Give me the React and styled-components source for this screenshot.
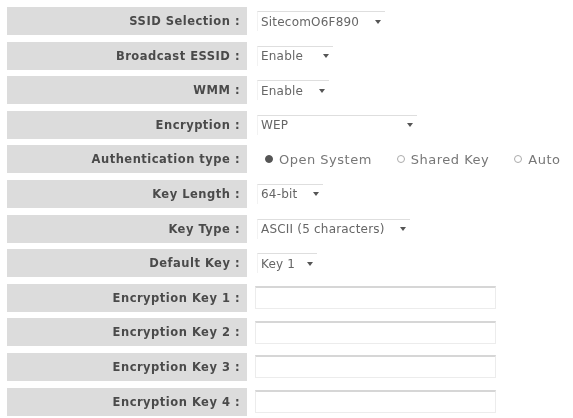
import React from "react";
import styled, { createGlobalStyle } from "styled-components";

const Global = createGlobalStyle`
  html, body { margin: 0; padding: 0; background: #fff; }
  body { font-family: "DejaVu Sans", Verdana, sans-serif; }
`;

const Form = styled.div`
  display: flex;
  flex-direction: column;
  gap: 6.6px;
  padding: 7px 0 0 7px;
  width: 566px;
`;

const Row = styled.div`
  display: grid;
  grid-template-columns: 240px 1fr;
  column-gap: 4px;
  height: 28px;
`;

const Label = styled.div`
  background: #dcdcdc;
  color: #4a4a4a;
  font-weight: bold;
  font-size: 11.5px;
  letter-spacing: 0.5px;
  text-align: right;
  line-height: 28px;
  padding-right: 7px;
  white-space: nowrap;
  filter: blur(0.5px);
`;

const Value = styled.div`
  display: flex;
  align-items: center;
  padding-left: ${(p) => p.$pad ?? 7}px;
  color: #666;
  font-size: 12px;
  letter-spacing: 0.2px;
  white-space: nowrap;
  filter: blur(0.4px);
`;

const FakeSelect = styled.div`
  display: flex;
  align-items: center;
  justify-content: space-between;
  width: ${(p) => p.$w}px;
  height: 20px;
  box-sizing: border-box;
  padding: 0 4px 0 3px;
  border-top: 1px solid #dedede;
  border-left: 1px solid #f2f2f2;
  color: #666;
`;

const Caret = styled.span`
  width: 0;
  height: 0;
  border-left: 3px solid transparent;
  border-right: 3px solid transparent;
  border-top: 4px solid #555;
  margin-left: 6px;
`;

const Radios = styled.div`
  display: flex;
  align-items: center;
  gap: 25px;
`;

const RadioItem = styled.label`
  display: flex;
  align-items: center;
  gap: 6px;
  color: #777;
  font-size: 13px;
  letter-spacing: 0.5px;
`;

const Dot = styled.span`
  width: 8px;
  height: 8px;
  border-radius: 50%;
  box-sizing: border-box;
  border: 1px solid ${(p) => (p.$on ? "#555" : "#aaa")};
  background: ${(p) => (p.$on ? "#555" : "#fff")};
`;

const TextBox = styled.input`
  width: 241px;
  height: 23px;
  box-sizing: border-box;
  border: 1px solid #ececec;
  border-top: 2px solid #d6d6d6;
  background: #fff;
  outline: none;
  padding: 0;
`;

const Select = ({ w, children }) => (
  <FakeSelect $w={w}>
    <span>{children}</span>
    <Caret />
  </FakeSelect>
);

const rows = [
  { label: "SSID Selection :", sel: "SitecomO6F890", w: 128 },
  { label: "Broadcast ESSID :", sel: "Enable", w: 76 },
  { label: "WMM :", sel: "Enable", w: 72 },
  { label: "Encryption :", sel: "WEP", w: 160 },
  { label: "Authentication type :", radios: true },
  { label: "Key Length :", sel: "64-bit", w: 66 },
  { label: "Key Type :", sel: "ASCII (5 characters)", w: 153 },
  { label: "Default Key :", sel: "Key 1", w: 60 },
  { label: "Encryption Key 1 :", input: true },
  { label: "Encryption Key 2 :", input: true },
  { label: "Encryption Key 3 :", input: true },
  { label: "Encryption Key 4 :", input: true },
];

export default function App() {
  return (
    <>
      <Global />
      <Form>
        {rows.map((r) => (
          <Row key={r.label}>
            <Label>{r.label}</Label>
            {r.radios ? (
              <Value $pad={14}>
                <Radios>
                  <RadioItem>
                    <Dot $on />
                    Open System
                  </RadioItem>
                  <RadioItem>
                    <Dot />
                    Shared Key
                  </RadioItem>
                  <RadioItem>
                    <Dot />
                    Auto
                  </RadioItem>
                </Radios>
              </Value>
            ) : r.input ? (
              <Value $pad={4}>
                <TextBox type="text" />
              </Value>
            ) : (
              <Value $pad={6}>
                <Select w={r.w}>{r.sel}</Select>
              </Value>
            )}
          </Row>
        ))}
      </Form>
    </>
  );
}
